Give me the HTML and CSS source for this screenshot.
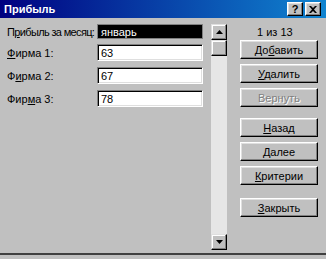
FILE: index.html
```html
<!DOCTYPE html>
<html lang="ru">

<head>
    <meta charset="utf-8">
    <title>Прибыль</title>
    <link rel="stylesheet" href="styles.css">
</head>

<body>
    <div class="window">
        <div class="titlebar">
            <span class="title">Прибыль</span>
            <div class="tb_knapper">
                <span class="tb_knap hjaelp">?</span>
                <span class="tb_knap luk">
                    <svg width="8" height="7" viewBox="0 0 8 7"><path d="M0 0h2l2 2 2-2h2L5 3.5 8 7H6L4 5 2 7H0l3-3.5z" fill="#000"/></svg>
                </span>
            </div>
        </div>

        <div class="indhold">
            <div class="formular">
                <div class="raekke forste">
                    <span class="etiket lang">П<u>р</u>ибыль за месяц:</span>
                    <div class="felt valgt">январь</div>
                </div>
                <div class="raekke">
                    <span class="etiket"><u>Ф</u>ирма 1:</span>
                    <div class="felt">63</div>
                </div>
                <div class="raekke">
                    <span class="etiket">Ф<u>и</u>рма 2:</span>
                    <div class="felt">67</div>
                </div>
                <div class="raekke">
                    <span class="etiket">Фир<u>м</u>а 3:</span>
                    <div class="felt">78</div>
                </div>
            </div>

            <div class="scrollbar">
                <div class="pil">
                    <svg width="7" height="4" viewBox="0 0 7 4"><path d="M3.5 0L7 4H0z" fill="#000"/></svg>
                </div>
                <div class="greb"></div>
                <div class="spor"></div>
                <div class="pil">
                    <svg width="7" height="4" viewBox="0 0 7 4"><path d="M0 0h7L3.5 4z" fill="#000"/></svg>
                </div>
            </div>

            <div class="side">
                <div class="taeller">1 из 13</div>
                <button class="knap">До<u>б</u>авить</button>
                <button class="knap"><u>У</u>далить</button>
                <button class="knap inaktiv">Вернуть</button>
                <button class="knap"><u>Н</u>азад</button>
                <button class="knap"><u>Д</u>алее</button>
                <button class="knap kriterier"><u>К</u>ритерии</button>
                <button class="knap"><u>З</u>акрыть</button>
            </div>
        </div>

        <div class="bund"></div>
    </div>
</body>

</html>
```

FILE: styles.css
```css
body {
    margin: 0;
    font-family: 'Liberation Sans', Arial, sans-serif;
    font-size: 11px;
    background-color: #c0c0c0;
}

.window {
    width: 326px;
    height: 259px;
    background-color: #c0c0c0;
    display: flex;
    flex-direction: column;
    overflow: hidden;
}

.titlebar {
    height: 18px;
    background: linear-gradient(to right, #000080, #1084d0);
    display: flex;
    align-items: center;
    justify-content: space-between;
    padding: 0 5px 0 4px;
}

.title {
    color: #ffffff;
    font-weight: bold;
    font-size: 11px;
}

.tb_knapper {
    display: flex;
    gap: 2px;
}

.tb_knap {
    width: 16px;
    height: 14px;
    box-sizing: border-box;
    background: #c0c0c0;
    border-top: 1px solid #ffffff;
    border-left: 1px solid #ffffff;
    border-right: 1px solid #000000;
    border-bottom: 1px solid #000000;
    box-shadow: inset -1px -1px 0 #808080, inset 1px 1px 0 #dfdfdf;
    display: flex;
    align-items: center;
    justify-content: center;
    font-weight: bold;
    font-size: 11px;
    line-height: 1;
}

.indhold {
    flex: 1;
    display: flex;
    padding-top: 6px;
}

.formular {
    width: 196px;
    margin-left: 7px;
}

.raekke {
    display: flex;
    align-items: center;
    height: 17px;
    margin-top: 6px;
}

.raekke.forste {
    height: 15px;
    margin-top: 0;
    margin-bottom: -1px;
}

.etiket {
    width: 90px;
    color: #000000;
    white-space: nowrap;
}

.etiket.lang {
    letter-spacing: -0.65px;
}

.felt {
    width: 106px;
    height: 17px;
    box-sizing: border-box;
    background: #ffffff;
    border-top: 1px solid #808080;
    border-left: 1px solid #808080;
    border-right: 1px solid #ffffff;
    border-bottom: 1px solid #ffffff;
    box-shadow: inset 1px 1px 0 #000000, inset -1px -1px 0 #dfdfdf;
    padding: 2px 0 0 3px;
    line-height: 12px;
}

.felt.valgt {
    height: 15px;
    background: #000000;
    color: #ffffff;
    border-color: #808080;
    box-shadow: none;
    padding-top: 1px;
}

.scrollbar {
    width: 16px;
    height: 226px;
    margin-left: 8px;
    display: flex;
    flex-direction: column;
    background: #e6e6e6;
}

.pil,
.greb {
    width: 16px;
    height: 16px;
    box-sizing: border-box;
    background: #c0c0c0;
    border-top: 1px solid #dfdfdf;
    border-left: 1px solid #dfdfdf;
    border-right: 1px solid #000000;
    border-bottom: 1px solid #000000;
    box-shadow: inset -1px -1px 0 #808080, inset 1px 1px 0 #ffffff;
    display: flex;
    align-items: center;
    justify-content: center;
}

.spor {
    flex: 1;
}

.side {
    width: 78px;
    margin-left: 13px;
    display: flex;
    flex-direction: column;
}

.taeller {
    height: 16px;
    line-height: 16px;
    padding-left: 17px;
}

.knap {
    height: 19px;
    margin-bottom: 5px;
    font-family: 'Liberation Sans', Arial, sans-serif;
    font-size: 11px;
    color: #000000;
    background: #c0c0c0;
    border-top: 1px solid #ffffff;
    border-left: 1px solid #ffffff;
    border-right: 1px solid #000000;
    border-bottom: 1px solid #000000;
    box-shadow: inset -1px -1px 0 #808080, inset 1px 1px 0 #dfdfdf;
    padding: 0;
}

.knap.inaktiv {
    color: #808080;
    text-shadow: 1px 1px 0 #ffffff;
    margin-bottom: 11px;
}

.knap.kriterier {
    margin-bottom: 13px;
}

.bund {
    height: 4px;
    border-top: 2px solid #404040;
}
```
